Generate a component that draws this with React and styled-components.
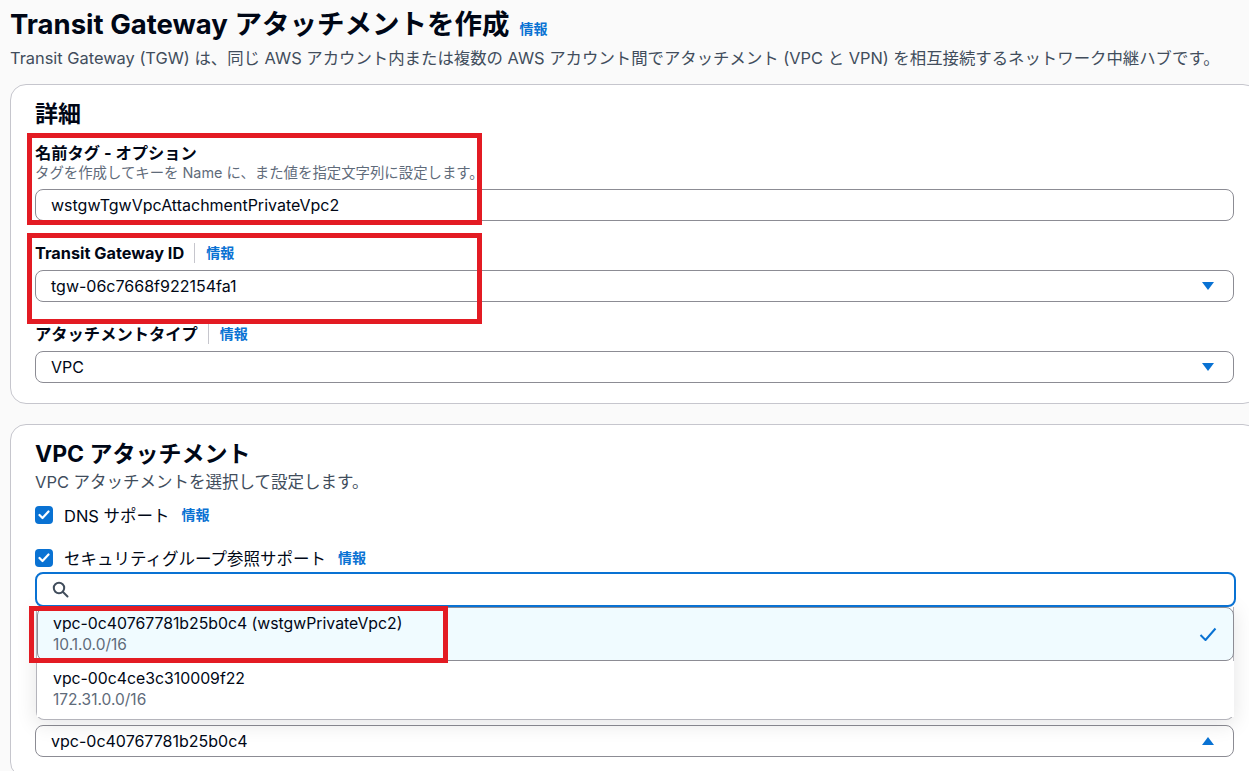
import React from "react";
import styled, { createGlobalStyle } from "styled-components";

const Global = createGlobalStyle`
  html, body { margin: 0; padding: 0; overflow: hidden; }
  body {
    font-family: Inter, "Noto Sans CJK JP", sans-serif;
    color: #000716;
    background: #fafafa;
  }
  * { box-sizing: border-box; }
`;

const Page = styled.div`
  min-height: 100vh;
  background: #fafafa;
  padding: 8px 0 0 10px;
`;

const TitleRow = styled.div`
  display: flex;
  align-items: baseline;
  gap: 10px;
`;

const Title = styled.h1`
  margin: 0;
  font-size: 27.5px;
  line-height: 33px;
  font-weight: 700;
  color: #000716;
`;

const Info = styled.a`
  font-size: 14px;
  line-height: 20px;
  font-weight: 700;
  color: #0972d3;
  text-decoration: none;
  margin-left: ${(p) => p.$gap || 0}px;
`;

const PageDesc = styled.p`
  margin: 6px 0 0;
  font-size: 16.4px;
  line-height: 22px;
  color: #414d5c;
  white-space: nowrap;
`;

const Card = styled.section`
  background: #fff;
  border: 1px solid #c6c6cd;
  border-radius: 16px;
  margin-top: ${(p) => p.$top}px;
  margin-right: -10px;
  padding: 14px 24px 20px;
`;

const Heading = styled.h2`
  margin: 0;
  font-size: 23px;
  line-height: 30px;
  font-weight: 700;
  color: #000716;
`;

const SectionDesc = styled.p`
  margin: 2px 0 0;
  font-size: 16.5px;
  line-height: 22px;
  color: #414d5c;
`;

const Field = styled.div`
  position: relative;
  display: flex;
  flex-direction: column;
  margin-top: ${(p) => p.$top}px;
`;

const LabelRow = styled.div`
  display: flex;
  align-items: center;
`;

const Label = styled.label`
  font-size: 16.3px;
  line-height: 20px;
  font-weight: 700;
  color: #000716;
`;

const Divider = styled.span`
  width: 1px;
  height: 20px;
  background: #c6c6cd;
  margin: 0 11px 0 10px;
`;

const FieldDesc = styled.div`
  font-size: 14.4px;
  line-height: 20px;
  color: #5f6b7a;
`;

const Control = styled.div`
  display: flex;
  align-items: center;
  justify-content: space-between;
  height: 32px;
  margin-top: ${(p) => p.$top}px;
  padding: 0 19px 0 15px;
  border: 1px solid #8c8c94;
  border-radius: 8px;
  background: #fff;
  font-size: 16px;
  color: #000716;
`;

const Annotation = styled.div`
  position: absolute;
  top: ${(p) => p.$top}px;
  left: ${(p) => p.$left}px;
  width: ${(p) => p.$w}px;
  height: ${(p) => p.$h}px;
  border: 5px solid #e31b23;
  pointer-events: none;
  z-index: 5;
`;

const CheckRow = styled.div`
  display: flex;
  align-items: center;
  height: 22px;
  margin-top: ${(p) => p.$top}px;
  font-size: 16.5px;
  color: #000716;
`;

const Box = styled.span`
  width: 18px;
  height: 18px;
  border-radius: 4px;
  background: #0972d3;
  display: inline-flex;
  align-items: center;
  justify-content: center;
  margin-right: 11px;
  flex: none;
`;

const Dropdown = styled.div`
  margin-top: 3px;
  display: flex;
  flex-direction: column;
`;

const SearchBox = styled.div`
  height: 35px;
  margin-right: -2px;
  border: 2px solid #0972d3;
  border-radius: 8px;
  background: #fff;
  display: flex;
  align-items: center;
  padding-left: 15px;
  position: relative;
  z-index: 2;
`;

const List = styled.ul`
  list-style: none;
  margin: 0 0 0 1px;
  padding: 0 0 2px;
  border: 1px solid #b4b4bb;
  border-top: none;
  border-radius: 0 0 8px 8px;
  background: #fff;
  box-shadow: 0 4px 20px 1px rgba(0, 7, 22, 0.1);
`;

const Option = styled.li`
  position: relative;
  display: flex;
  align-items: center;
  justify-content: space-between;
  padding: ${(p) => (p.$selected ? "5px 15px 5px 15px" : "7px 16px")};
  background: ${(p) => (p.$selected ? "#f0fbff" : "#fff")};
  border: ${(p) => (p.$selected ? "1px solid #8c8c94" : "none")};
  border-radius: ${(p) => (p.$selected ? "8px" : "0")};
  margin-right: -1px;
`;

const OptionText = styled.div`
  display: flex;
  flex-direction: column;
`;

const OptionMain = styled.span`
  font-size: 15.8px;
  line-height: 22px;
  color: #000716;
`;

const OptionSub = styled.span`
  font-size: 15.5px;
  line-height: 20px;
  color: #5f6b7a;
`;

const Caret = ({ up }) => (
  <svg width="12" height="8" viewBox="0 0 12 8" aria-hidden="true">
    {up ? <polygon points="0,8 12,8 6,0" fill="#0972d3" /> : <polygon points="0,0 12,0 6,8" fill="#0972d3" />}
  </svg>
);

const CheckMark = () => (
  <svg width="12" height="10" viewBox="0 0 12 10" aria-hidden="true">
    <polyline points="1.5,5 4.5,8 10.5,1.5" fill="none" stroke="#fff" strokeWidth="2.2" strokeLinecap="round" strokeLinejoin="round" />
  </svg>
);

const SelectedTick = () => (
  <svg width="18" height="15" viewBox="0 0 18 15" aria-hidden="true" style={{ marginRight: 1 }}>
    <polyline points="1.5,8 6.5,13 16.5,1.5" fill="none" stroke="#0972d3" strokeWidth="2" strokeLinejoin="round" />
  </svg>
);

const SearchIcon = () => (
  <svg width="17" height="17" viewBox="0 0 17 17" aria-hidden="true">
    <circle cx="7" cy="7" r="5.2" fill="none" stroke="#414d5c" strokeWidth="2" />
    <line x1="11" y1="11" x2="15.5" y2="15.5" stroke="#414d5c" strokeWidth="2" strokeLinecap="round" />
  </svg>
);

export default function App() {
  return (
    <>
      <Global />
      <Page>
        <TitleRow>
          <Title>Transit Gateway アタッチメントを作成</Title>
          <Info href="#">情報</Info>
        </TitleRow>
        <PageDesc>
          Transit Gateway (TGW) は、同じ AWS アカウント内または複数の AWS アカウント間でアタッチメント (VPC と VPN) を相互接続するネットワーク中継ハブです。
        </PageDesc>

        <Card $top={15}>
          <Heading>詳細</Heading>
          <Field $top={14}>
            <Annotation $top={-10} $left={-8} $w={455} $h={92} />
            <Label>名前タグ - オプション</Label>
            <FieldDesc>タグを作成してキーを Name に、また値を指定文字列に設定します。</FieldDesc>
            <Control $top={6}>wstgwTgwVpcAttachmentPrivateVpc2</Control>
          </Field>
          <Field $top={22}>
            <Annotation $top={-10} $left={-8} $w={455} $h={91} />
            <LabelRow>
              <Label>Transit Gateway ID</Label>
              <Divider />
              <Info href="#">情報</Info>
            </LabelRow>
            <Control $top={7}>
              <span>tgw-06c7668f922154fa1</span>
              <Caret />
            </Control>
          </Field>
          <Field $top={22}>
            <LabelRow>
              <Label>アタッチメントタイプ</Label>
              <Divider />
              <Info href="#">情報</Info>
            </LabelRow>
            <Control $top={7}>
              <span>VPC</span>
              <Caret />
            </Control>
          </Field>
        </Card>

        <Card $top={20}>
          <Heading>VPC アタッチメント</Heading>
          <SectionDesc>VPC アタッチメントを選択して設定します。</SectionDesc>
          <CheckRow $top={11}>
            <Box><CheckMark /></Box>
            DNS サポート
            <Info href="#" $gap={12}>情報</Info>
          </CheckRow>
          <CheckRow $top={21}>
            <Box><CheckMark /></Box>
            セキュリティグループ参照サポート
            <Info href="#" $gap={12}>情報</Info>
          </CheckRow>
          <Dropdown>
            <SearchBox>
              <SearchIcon />
            </SearchBox>
            <List>
              <Option $selected>
                <Annotation $top={-2} $left={-9} $w={419} $h={57} />
                <OptionText>
                  <OptionMain>vpc-0c40767781b25b0c4 (wstgwPrivateVpc2)</OptionMain>
                  <OptionSub>10.1.0.0/16</OptionSub>
                </OptionText>
                <SelectedTick />
              </Option>
              <Option>
                <OptionText>
                  <OptionMain>vpc-00c4ce3c310009f22</OptionMain>
                  <OptionSub>172.31.0.0/16</OptionSub>
                </OptionText>
              </Option>
            </List>
          </Dropdown>
          <Control $top={5}>
            <span>vpc-0c40767781b25b0c4</span>
            <Caret up />
          </Control>
        </Card>
      </Page>
    </>
  );
}
